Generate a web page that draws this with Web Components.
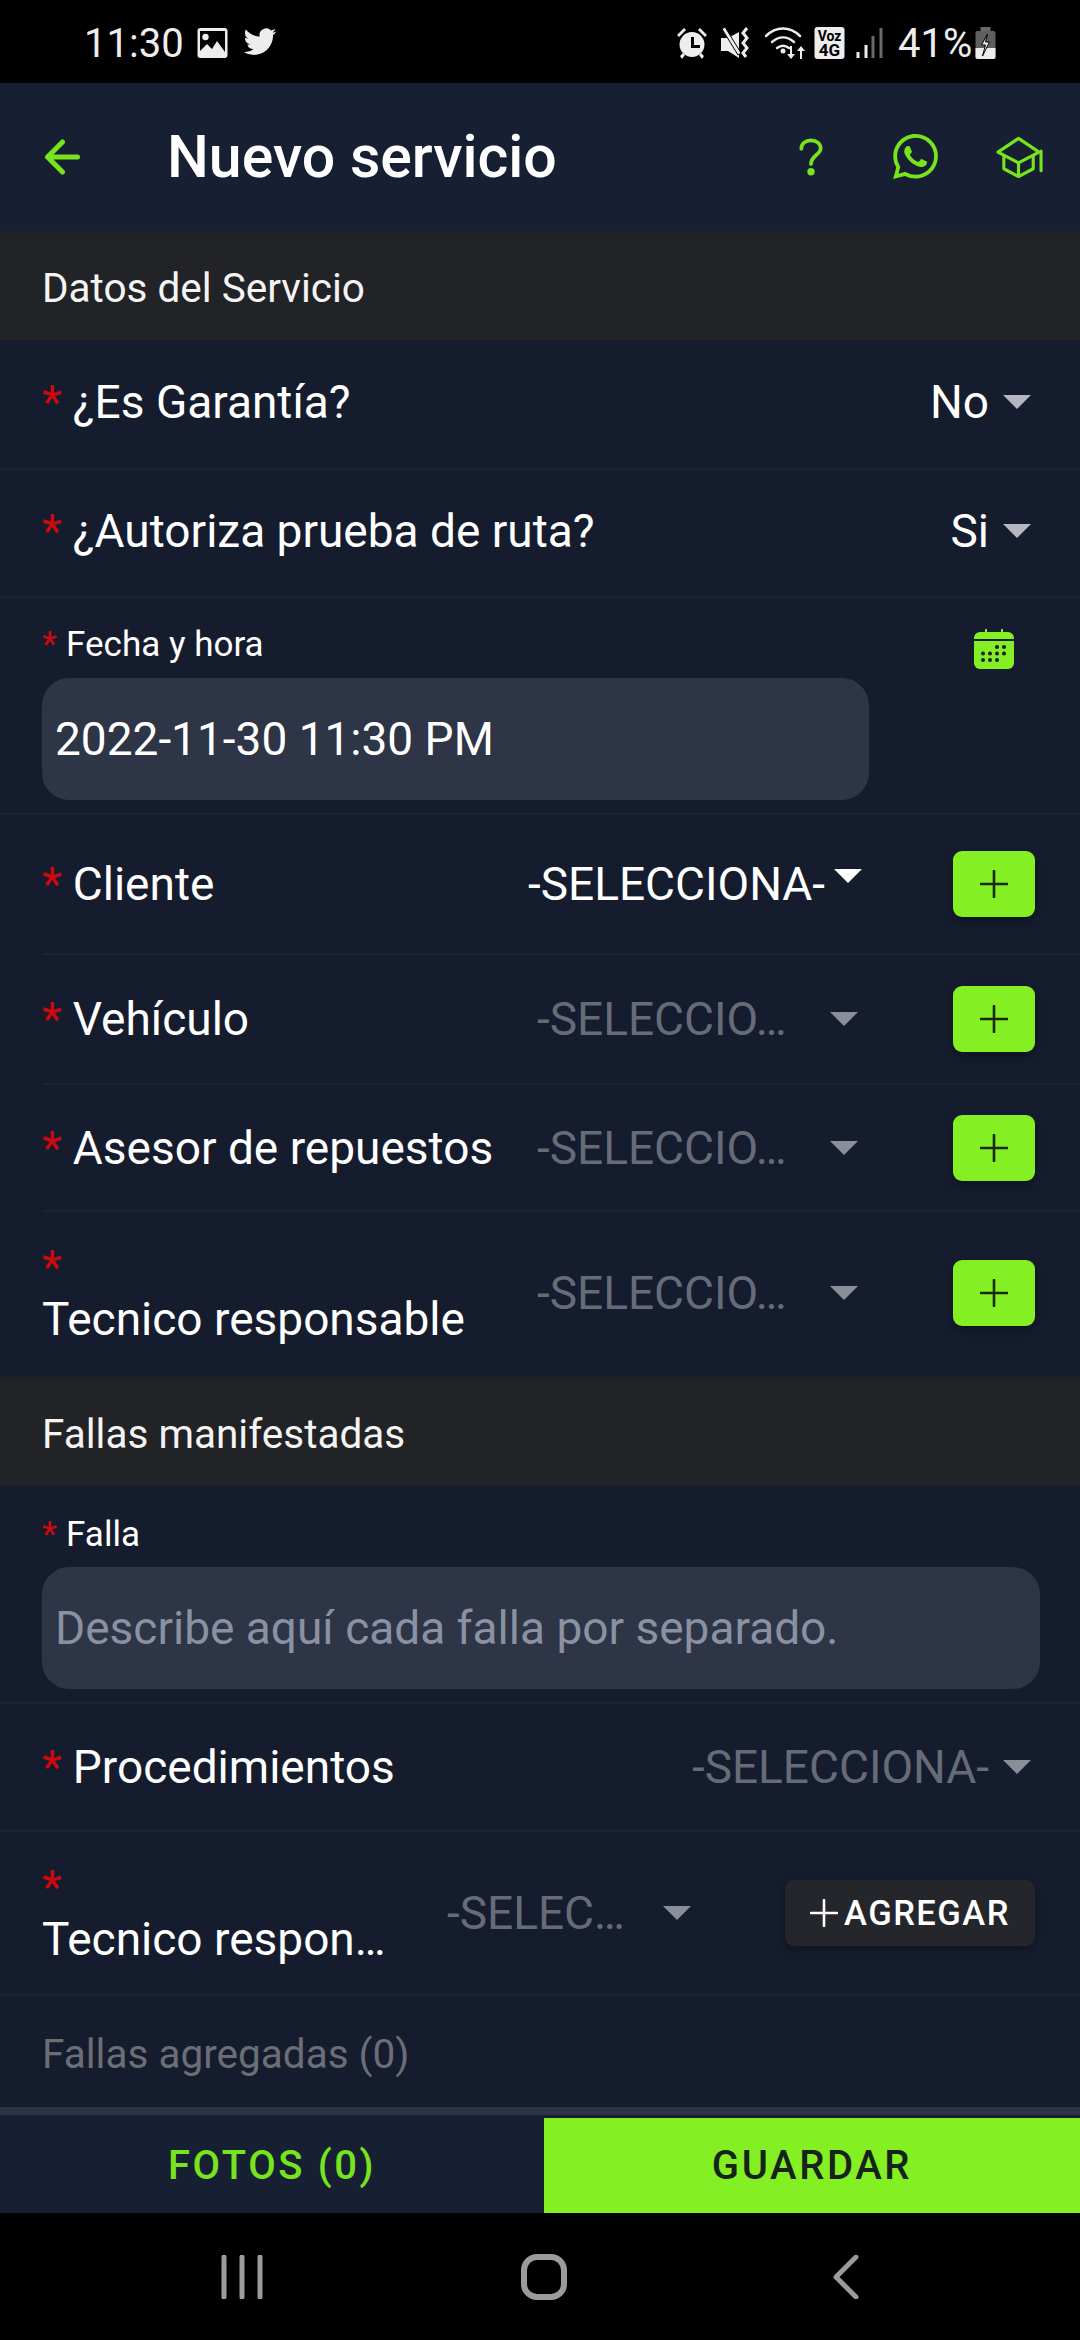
<!DOCTYPE html>
<html lang="es">
<head>
<meta charset="utf-8">
<title>Nuevo servicio</title>
<style>
  html, body { margin: 0; padding: 0; background: #000; }
  body { width: 1080px; height: 2340px; display: flex; flex-direction: column; overflow: hidden; font-family: Roboto, "Liberation Sans", sans-serif; color: #fff; }
  main { flex: 1; display: flex; flex-direction: column; background: #151c2e; min-height: 0; }
</style>
</head>
<body>
<status-bar></status-bar>
<app-header>Nuevo servicio</app-header>
<main>
  <section-head>Datos del Servicio</section-head>
  <select-row h="130" value="No" bright up>¿Es Garantía?</select-row>
  <select-row h="128" value="Si" bright up>¿Autoriza prueba de ruta?</select-row>
  <date-field></date-field>
  <select-row h="140" value="-SELECCIONA-" bright add raised inset>Cliente</select-row>
  <select-row h="130" value="-SELECCIO…" add inset>Vehículo</select-row>
  <select-row h="127" value="-SELECCIO…" add inset>Asesor de repuestos</select-row>
  <select-row h="164" value="-SELECCIO…" add stacked noline>Tecnico responsable</select-row>
  <section-head>Fallas manifestadas</section-head>
  <text-field></text-field>
  <select-row h="128" value="-SELECCIONA-">Procedimientos</select-row>
  <select-row h="164" value="-SELEC…" agregar stacked>Tecnico respon…</select-row>
  <added-list>Fallas agregadas (0)</added-list>
</main>
<app-footer></app-footer>
<nav-bar></nav-bar>

<script>
const GREEN = '#84ef22';
const ICON_GREEN = '#78e31f';
const RED = '#cf0810';

class StatusBar extends HTMLElement {
  constructor() {
    super();
    this.attachShadow({ mode: 'open' });
    this.shadowRoot.innerHTML = `
    <style>
      :host { display: flex; align-items: center; height: 83px; background: #000; color: #eeeced; font-size: 40px; box-sizing: border-box; padding: 2px 0 0 84px; flex: none; }
      span { line-height: 1; padding-top: 2px; }
      svg { display: block; flex: none; fill: #eeeced; }
      .time { width: 113px; }
      .right { margin-left: auto; display: flex; align-items: center; margin-right: 84px; }
    </style>
    <span class="time">11:30</span>
    <svg width="31" height="30" viewBox="0 0 30 30"><path fill-rule="evenodd" d="M3 0h24a3 3 0 0 1 3 3v24a3 3 0 0 1-3 3H3a3 3 0 0 1-3-3V3a3 3 0 0 1 3-3zM2.500 23l7-7 5 5 5-8 8 11V3H2.500z"/><circle cx="8" cy="9" r="3.200"/></svg>
    <svg style="margin-left:15px" width="34" height="30" viewBox="0 0 24 22"><path transform="translate(0 -2)" d="M23.953 4.570a10 10 0 0 1-2.825.775 4.958 4.958 0 0 0 2.163-2.723c-.951.555-2.005.959-3.127 1.184a4.920 4.920 0 0 0-8.384 4.482C7.690 8.095 4.067 6.130 1.640 3.162a4.822 4.822 0 0 0-.666 2.475c0 1.710.870 3.213 2.188 4.096a4.904 4.904 0 0 1-2.228-.616v.060a4.923 4.923 0 0 0 3.946 4.827 4.996 4.996 0 0 1-2.212.085 4.936 4.936 0 0 0 4.604 3.417 9.867 9.867 0 0 1-6.102 2.105c-.390 0-.779-.023-1.170-.067a13.995 13.995 0 0 0 7.557 2.209c9.053 0 13.998-7.496 13.998-13.985 0-.210 0-.420-.015-.630A9.935 9.935 0 0 0 24 4.590z"/></svg>
    <div class="right">
      <svg width="32" height="32" viewBox="0 0 32 32"><path d="M16 5a12.500 12.500 0 1 0 0 25 12.500 12.500 0 0 0 0-25z"/><path d="M15 10h3v8h6v3h-9z" fill="#000"/><path d="M1 8l7-7 2 2-7 7zM31 8l-7-7-2 2 7 7zM4 29l3-3 2 2-3 4zM28 29l-3-3-2 2 3 4z"/></svg>
      <svg style="margin-left:13px" width="31" height="31" viewBox="0 0 31 31"><path d="M0 11h7l11-6v26l-11-7H0z"/><path d="M1 2l3-2 16 26-3 2z" stroke="#000" stroke-width="1"/><path d="M26 1l-4 5 4 5-4 5 4 5-4 5 3 4" fill="none" stroke="#eeeced" stroke-width="3"/></svg>
      <svg style="margin-left:13px" width="41" height="32" viewBox="0 0 41 32"><g fill="none" stroke="#eeeced" stroke-width="2.500" stroke-linecap="round"><path d="M1 9c10-10 24-10 34 0"/><path d="M7 15c7-6 15-6 22 0"/><path d="M12 21c4-3 8-3 12 0"/></g><circle cx="18" cy="24" r="2.500"/><path d="M25 19h2v8h3l-4 5-4-5h3zM35 32h2v-8h3l-4-5-4 5h3z"/></svg>
      <svg style="margin-left:8px" width="31" height="32" viewBox="0 0 30 32"><rect width="30" height="32" rx="3"/><text x="15" y="14" font-size="14" font-weight="700" text-anchor="middle" fill="#000" font-family="Roboto">Voz</text><text x="15" y="29" font-size="17" font-weight="700" text-anchor="middle" fill="#000" font-family="Roboto">4G</text></svg>
      <svg style="margin-left:11px" width="27" height="30" viewBox="0 0 26 30"><rect x="0" y="24" width="3" height="6"/><rect x="8" y="17" width="3" height="13"/><rect x="15" y="8" width="3" height="22" fill="#6a6a6a"/><rect x="23" y="0" width="3" height="30" fill="#6a6a6a"/></svg>
      <span style="margin-left:15px;width:70px">41%</span>
      <svg style="margin-left:7px" width="21" height="32" viewBox="0 0 20 32"><rect x="5" y="0" width="10" height="4" fill="#6a6a6a"/><rect y="4" width="20" height="28" rx="2" fill="#5f5f5f"/><path d="M0 21h20v9a2 2 0 0 1-2 2H2a2 2 0 0 1-2-2z"/><path d="M12 7l-6 11h4l-3 11 7-14h-4l2-8z" fill="#eeeced" stroke="#000" stroke-width="1"/></svg>
    </div>`;
  }
}

class AppHeader extends HTMLElement {
  constructor() {
    super();
    this.attachShadow({ mode: 'open' });
    this.shadowRoot.innerHTML = `
    <style>
      :host { display: flex; align-items: center; height: 147px; background: #172033; flex: none; box-sizing: border-box; padding: 0 37px 0 44px; }
      .back { width: 37px; height: 36px; display: block; flex: none; }
      .title { margin-left: 86px; font-size: 59px; font-weight: 500; color: #fff; flex: 1; line-height: 1; }
      .icons { display: flex; align-items: center; }
      svg { display: block; flex: none; }
    </style>
    <svg class="back" viewBox="0 0 36 36" fill="none" stroke="${ICON_GREEN}" stroke-width="5" stroke-linecap="round" stroke-linejoin="round"><path d="M33 18H3M18 3L3 18l15 15"/></svg>
    <span class="title"><slot></slot></span>
    <div class="icons">
      <svg width="24" height="38" viewBox="0 0 26 40" fill="none" stroke="${ICON_GREEN}" stroke-width="4" stroke-linecap="round"><path d="M2.500 11C2.500 5.500 7 2 13 2s10.500 3.500 10.500 8.500c0 7-10.500 8-10.500 17"/><circle cx="13" cy="36" r="2" fill="${ICON_GREEN}"/></svg>
      <svg style="margin-left:70px" width="45" height="45" viewBox="0 0 24 24" fill="${ICON_GREEN}"><path d="M17.472 14.382c-.297-.149-1.758-.867-2.030-.967-.273-.099-.471-.148-.670.150-.197.297-.767.966-.940 1.164-.173.199-.347.223-.644.075-.297-.150-1.255-.463-2.390-1.475-.883-.788-1.480-1.761-1.653-2.059-.173-.297-.018-.458.130-.606.134-.133.298-.347.446-.520.149-.174.198-.298.298-.497.099-.198.050-.371-.025-.520-.075-.149-.669-1.612-.916-2.207-.242-.579-.487-.500-.669-.510-.173-.008-.371-.010-.570-.010-.198 0-.520.074-.792.372-.272.297-1.040 1.016-1.040 2.479 0 1.462 1.065 2.875 1.213 3.074.149.198 2.096 3.200 5.077 4.487.709.306 1.262.489 1.694.625.712.227 1.360.195 1.871.118.571-.085 1.758-.719 2.006-1.413.248-.694.248-1.289.173-1.413-.074-.124-.272-.198-.570-.347m-5.421 7.403h-.004a9.870 9.870 0 0 1-5.031-1.378l-.361-.214-3.741.982.998-3.648-.235-.374a9.860 9.860 0 0 1-1.510-5.260c.001-5.450 4.436-9.884 9.888-9.884 2.640 0 5.122 1.030 6.988 2.898a9.825 9.825 0 0 1 2.893 6.994c-.003 5.450-4.437 9.884-9.885 9.884m8.413-18.297A11.815 11.815 0 0 0 12.050 0C5.495 0 .160 5.335.157 11.892c0 2.096.547 4.142 1.588 5.945L.057 24l6.305-1.654a11.882 11.882 0 0 0 5.683 1.448h.005c6.554 0 11.890-5.335 11.893-11.893a11.821 11.821 0 0 0-3.480-8.413z"/></svg>
      <svg style="margin-left:58px" width="47" height="42" viewBox="0 0 48 42" fill="none" stroke="${ICON_GREEN}" stroke-width="3.200" stroke-linejoin="round"><path d="M23 2L2 16l21 11 21-11z"/><path d="M8 20v13l15 8 15-8V20M23 27v14"/><path d="M46 15v20" stroke-linecap="round"/></svg>
    </div>`;
  }
}

class SectionHead extends HTMLElement {
  constructor() {
    super();
    this.attachShadow({ mode: 'open' });
    this.shadowRoot.innerHTML = `
    <style>
      :host { display: flex; align-items: center; height: 110px; box-sizing: border-box; padding: 6px 0 0 42px; flex: none; background: linear-gradient(#1d2029, #222327 7px); font-size: 40.500px; color: #f4f4f4; }
    </style>
    <slot></slot>`;
  }
}

class SelectRow extends HTMLElement {
  constructor() {
    super();
    this.attachShadow({ mode: 'open' });
    const value = this.getAttribute('value');
    const bright = this.hasAttribute('bright');
    const add = this.hasAttribute('add');
    const agregar = this.hasAttribute('agregar');
    const stacked = this.hasAttribute('stacked');
    const raised = this.hasAttribute('raised');
    const inset = this.hasAttribute('inset');
    const plain = !add && !agregar;
    const arrowCol = bright ? '#b4b7bf' : '#8a8e99';
    let selCss = '';
    if (add && raised) selCss = 'width: 334px; margin-right: 91px;';
    else if (add) selCss = 'width: 321px; margin-right: 95px;';
    else if (agregar) selCss = 'width: 244px; margin-right: 94px;';
    let extra = '';
    if (add) extra = `<add-button></add-button>`;
    if (agregar) extra = `<agregar-button></agregar-button>`;
    this.shadowRoot.innerHTML = `
    <style>
      :host { display: block; height: ${this.getAttribute('h')}px; flex: none; }
      .row { height: calc(100% - 2px); box-sizing: border-box; display: flex; align-items: center; padding: 0 ${plain ? 49 : 45}px ${this.hasAttribute('up') ? 4 : 0}px 42px; }
      .rule { height: 2px; background: ${this.hasAttribute('noline') ? 'transparent' : '#1c2433'}; margin-left: ${inset ? 43 : 0}px; }
      .label { flex: 1; min-width: 0; font-size: 46px; line-height: 58px; color: #fff; white-space: nowrap; }
      .star { color: ${RED}; margin-right: 11px; }
      .stack-star { display: block; height: 52px; }
      .value { font-size: 46px; color: ${bright ? '#fff' : '#666b78'}; white-space: nowrap; }
      .arrow { width: 0; height: 0; flex: none; border-left: 14px solid transparent; border-right: 14px solid transparent; border-top: 14px solid ${raised ? '#fff' : arrowCol}; margin-left: ${add || agregar ? 'auto' : '14px'}; ${raised ? 'margin-bottom: 16px;' : ''} }
      .sel { display: flex; align-items: center; ${selCss} }
    </style>
    <div class="row">
      <div class="label">${stacked ? '<span class="star stack-star">*</span>' : '<span class="star">*</span>'}<slot></slot></div>
      <div class="sel"><span class="value">${value}</span><span class="arrow"></span></div>
      ${extra}
    </div>
    <div class="rule"></div>`;
  }
}

class AddButton extends HTMLElement {
  constructor() {
    super();
    this.attachShadow({ mode: 'open' });
    this.shadowRoot.innerHTML = `
    <style>
      :host { display: flex; width: 82px; height: 66px; flex: none; align-items: center; justify-content: center; background: ${GREEN}; border-radius: 9px; box-shadow: 0 4px 8px rgba(0,0,0,.35); }
      svg { display: block; }
    </style>
    <svg width="28" height="28" viewBox="0 0 28 28" stroke="#1a2a10" stroke-width="2.600" stroke-linecap="round"><path d="M14 1v26M1 14h26"/></svg>`;
  }
}

class AgregarButton extends HTMLElement {
  constructor() {
    super();
    this.attachShadow({ mode: 'open' });
    this.shadowRoot.innerHTML = `
    <style>
      :host { display: flex; width: 250px; height: 66px; flex: none; align-items: center; justify-content: center; background: #24262c; border-radius: 9px; color: #fff; font-size: 34.500px; font-weight: 500; letter-spacing: 1.500px; box-shadow: 0 3px 8px rgba(0,0,0,.3); }
      svg { display: block; margin-right: 6px; }
    </style>
    <svg width="28" height="28" viewBox="0 0 28 28" stroke="#fff" stroke-width="2.600" stroke-linecap="round"><path d="M14 1v26M1 14h26"/></svg>
    <span>AGREGAR</span>`;
  }
}

class DateField extends HTMLElement {
  constructor() {
    super();
    this.attachShadow({ mode: 'open' });
    this.shadowRoot.innerHTML = `
    <style>
      :host { display: block; height: 217px; flex: none; box-sizing: border-box; padding: 0 0 0 42px; border-bottom: 2px solid #1c2433; }
      .top { display: flex; justify-content: space-between; padding: 27px 66px 0 0; height: 80px; box-sizing: border-box; }
      .lab { font-size: 35px; line-height: 40px; color: #fff; }
      .star { color: ${RED}; margin-right: 9px; }
      .box { width: 827px; height: 122px; border-radius: 27px; background: #2d3546; display: flex; align-items: center; padding-left: 13px; box-sizing: border-box; font-size: 46px; color: #fff; }
      svg { display: block; margin-top: 4px; }
    </style>
    <div class="top">
      <span class="lab"><span class="star">*</span>Fecha y hora</span>
      <svg width="40" height="40" viewBox="0 0 40 40"><path d="M6 3h5V0h2v3h14V0h2v3h5a6 6 0 0 1 6 6v1H0V9a6 6 0 0 1 6-6z" fill="${GREEN}"/><path d="M0 12h40v22a6 6 0 0 1-6 6H6a6 6 0 0 1-6-6z" fill="${GREEN}"/><g fill="#141c2e"><circle cx="23" cy="18" r="2"/><circle cx="30" cy="18" r="2"/><circle cx="9" cy="24.500" r="2"/><circle cx="16" cy="24.500" r="2"/><circle cx="23" cy="24.500" r="2"/><circle cx="30" cy="24.500" r="2"/><circle cx="9" cy="31" r="2"/><circle cx="16" cy="31" r="2"/><circle cx="23" cy="31" r="2"/></g></svg>
    </div>
    <div class="box">2022-11-30 11:30 PM</div>`;
  }
}

class TextField extends HTMLElement {
  constructor() {
    super();
    this.attachShadow({ mode: 'open' });
    this.shadowRoot.innerHTML = `
    <style>
      :host { display: block; height: 218px; flex: none; box-sizing: border-box; padding: 0 40px 0 42px; border-bottom: 2px solid #1c2433; }
      .lab { font-size: 35px; line-height: 40px; color: #fff; padding-top: 29px; height: 81px; box-sizing: border-box; display: block; }
      .star { color: ${RED}; margin-right: 9px; }
      .box { height: 122px; border-radius: 27px; background: #2d3546; display: flex; align-items: center; padding-left: 13px; box-sizing: border-box; font-size: 46px; color: #8a91a3; }
    </style>
    <span class="lab"><span class="star">*</span>Falla</span>
    <div class="box">Describe aquí cada falla por separado.</div>`;
  }
}

class AddedList extends HTMLElement {
  constructor() {
    super();
    this.attachShadow({ mode: 'open' });
    this.shadowRoot.innerHTML = `
    <style>
      :host { display: flex; flex: 1; align-items: center; padding: 4px 0 0 42px; font-size: 40.500px; color: #6b6e75; min-height: 0; }
    </style>
    <slot></slot>`;
  }
}

class AppFooter extends HTMLElement {
  constructor() {
    super();
    this.attachShadow({ mode: 'open' });
    this.shadowRoot.innerHTML = `
    <style>
      :host { display: block; flex: none; }
      .bar { height: 8px; background: #2c3446; }
      .btns { display: flex; height: 95px; background: #172033; padding-top: 3px; box-sizing: content-box; }
      .btn { display: flex; align-items: center; justify-content: center; font-size: 40px; font-weight: 500; letter-spacing: 2.600px; }
      .a { width: 544px; color: ${ICON_GREEN}; }
      .b { flex: 1; background: ${GREEN}; color: #15241a; }
    </style>
    <div class="bar"></div>
    <div class="btns"><div class="btn a">FOTOS (0)</div><div class="btn b">GUARDAR</div></div>`;
  }
}

class NavBar extends HTMLElement {
  constructor() {
    super();
    this.attachShadow({ mode: 'open' });
    this.shadowRoot.innerHTML = `
    <style>
      :host { display: block; height: 127px; flex: none; background: #000; }
      .wrap { display: grid; grid-template-columns: repeat(3, 302px); height: 100%; align-items: center; justify-items: center; padding-left: 91px; }
      svg { display: block; }
    </style>
    <div class="wrap">
      <svg width="42" height="44" viewBox="0 0 42 44" stroke="#9b9b9b" stroke-width="5" stroke-linecap="round"><path d="M3 2v40M21 2v40M39 2v40"/></svg>
      <svg width="46" height="46" viewBox="0 0 46 46" fill="none" stroke="#9b9b9b" stroke-width="6"><rect x="3" y="3" width="40" height="40" rx="13"/></svg>
      <svg width="26" height="44" viewBox="0 0 26 44" fill="none" stroke="#9b9b9b" stroke-width="5" stroke-linecap="round" stroke-linejoin="round"><path d="M23 2L3 22l20 20"/></svg>
    </div>`;
  }
}

customElements.define('status-bar', StatusBar);
customElements.define('app-header', AppHeader);
customElements.define('section-head', SectionHead);
customElements.define('add-button', AddButton);
customElements.define('agregar-button', AgregarButton);
customElements.define('select-row', SelectRow);
customElements.define('date-field', DateField);
customElements.define('text-field', TextField);
customElements.define('added-list', AddedList);
customElements.define('app-footer', AppFooter);
customElements.define('nav-bar', NavBar);
</script>
</body>
</html>
